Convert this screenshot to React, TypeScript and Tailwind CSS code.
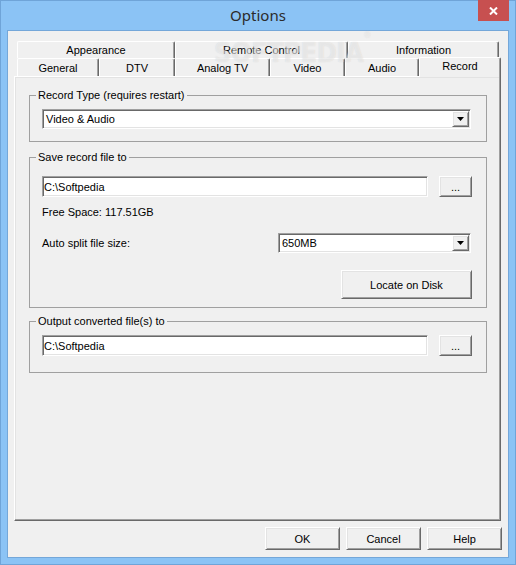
import React from "react";

const FONT = "font-['Liberation_Sans',Arial,sans-serif]";

// classic win32 3d edges
const sunken =
  "bg-white border border-t-[#a0a0a0] border-l-[#a0a0a0] border-r-white border-b-white shadow-[inset_1px_1px_0_#696969,inset_-1px_-1px_0_#e3e3e3]";
const raised =
  "bg-[#f0f0f0] border border-t-white border-l-white border-r-[#696969] border-b-[#696969] shadow-[inset_1px_1px_0_#e3e3e3,inset_-1px_-1px_0_#a0a0a0]";

const Button = ({ label, className }: { label: string; className: string }) => {
  return (
    <button
      className={`${raised} ${className} flex items-center justify-center text-[11px] leading-[14px] text-black`}
    >
      {label}
    </button>
  );
};

const Select = ({ value, className }: { value: string; className: string }) => {
  return (
    <div className={`${sunken} ${className} h-[20px] p-[1px] flex items-center`}>
      <span className="flex-1 pl-[2px] text-[11px] leading-[14px]">{value}</span>
      <span className={`${raised} w-[17px] h-[16px] flex items-center justify-center`}>
        <svg width="7" height="4" viewBox="0 0 7 4">
          <path d="M0 0h7L3.5 4z" fill="#000" />
        </svg>
      </span>
    </div>
  );
};

const TextField = ({ value }: { value: string }) => {
  return (
    <div className={`${sunken} w-[386px] h-[21px] flex items-center pl-[1px] text-[11px] leading-[14px]`}>
      {value}
    </div>
  );
};

const Group = ({
  title,
  className,
  children,
}: {
  title: string;
  className: string;
  children: React.ReactNode;
}) => {
  return (
    <fieldset className="w-[458px] border border-[#a0a0a0]">
      <legend className="ml-[6px] px-[2px] text-[11px] leading-[14px]">{title}</legend>
      <div className={`flex flex-col pl-[12px] ${className}`}>{children}</div>
    </fieldset>
  );
};

const tabBase =
  "border-t border-l border-r border-t-white border-l-white border-r-[#696969] rounded-t-[2px] shadow-[inset_-1px_0_0_#a0a0a0] bg-[#f0f0f0] flex justify-center text-[11px] leading-[14px]";

const Tab = ({ label, className }: { label: string; className: string }) => {
  return <div className={`${tabBase} ${className}`}>{label}</div>;
};

export default function App() {
  return (
    <div
      className={`w-[516px] h-[565px] bg-[#8bc3f5] border border-[#6fa4d8] flex flex-col text-black ${FONT}`}
    >
      {/* title bar */}
      <div className="relative h-[29px] flex items-center justify-center">
        <span className="font-['Noto_Sans',sans-serif] text-[15px] text-[#2b2b2b]">Options</span>
        <div className="absolute top-[-1px] right-[6px] w-[31px] h-[21px] bg-[#c75050] flex items-center justify-center">
          <svg width="9" height="8" viewBox="0 0 9 8">
            <path d="M1 0.5l7 7M8 0.5l-7 7" stroke="#fff" strokeWidth="2" />
          </svg>
        </div>
      </div>

      {/* client */}
      <div className="mx-[6px] h-[528px] border border-[#74a7d9] bg-[#f0f0f0] flex flex-col pt-[10px]">
        <div className="relative ml-[6px] w-[487px] flex flex-col">
          <div className="flex h-[17px] pl-[3px]">
            <Tab label="Appearance" className="w-[158px] h-[17px] pt-[1px]" />
            <Tab label="Remote Control" className="w-[173px] h-[17px] pt-[1px]" />
            <Tab label="Information" className="w-[151px] h-[17px] pt-[1px]" />
          </div>
          <div className="flex items-end h-[18px] pl-[3px]">
            <Tab label="General" className="w-[82px] h-[18px] pt-[2px]" />
            <Tab label="DTV" className="w-[76px] h-[18px] pt-[2px]" />
            <Tab label="Analog TV" className="w-[95px] h-[18px] pt-[2px]" />
            <Tab label="Video" className="w-[75px] h-[18px] pt-[2px]" />
            <Tab label="Audio" className="w-[74px] h-[18px] pt-[2px]" />
            <Tab label="Record" className="relative z-10 w-[82px] h-[20px] -mt-[1px] -mb-[1px] pt-[1px]" />
          </div>

          {/* tab page */}
          <div className="h-[445px] border border-t-white border-l-white border-r-[#696969] border-b-[#696969] shadow-[inset_-1px_-1px_0_#a0a0a0,inset_1px_1px_0_#e3e3e3] pl-[14px] pt-[11px] flex flex-col">
            <Group title="Record Type (requires restart)" className="pt-[7px] pb-[12px]">
              <Select value="Video & Audio" className="w-[429px]" />
            </Group>

            <div className="mt-[8px]">
              <Group title="Save record file to" className="pt-[12px] pb-[8px] pr-[14px]">
                <div className="flex gap-[11px]">
                  <TextField value="C:\Softpedia" />
                  <Button label="..." className="w-[33px] h-[21px]" />
                </div>
                <div className="mt-[8px] text-[11px] leading-[14px]">Free Space: 117.51GB</div>
                <div className="mt-[14px] h-[20px] flex items-center justify-between">
                  <span className="text-[11px] leading-[14px]">Auto split file size:</span>
                  <Select value="650MB" className="w-[193px] mr-[1px]" />
                </div>
                <div className="mt-[17px] flex justify-end">
                  <Button label="Locate on Disk" className="w-[131px] h-[29px]" />
                </div>
              </Group>
            </div>

            <div className="mt-[6px]">
              <Group title="Output converted file(s) to" className="pt-[7px] pb-[16px]">
                <div className="flex gap-[11px]">
                  <TextField value="C:\Softpedia" />
                  <Button label="..." className="w-[33px] h-[21px]" />
                </div>
              </Group>
            </div>
          </div>

          {/* watermark */}
          <span className="pointer-events-none absolute left-[200px] top-[-2px] font-['DejaVu_Sans_Condensed',sans-serif] font-bold text-[27px] leading-none tracking-[-0.5px] text-white/45 [text-shadow:0_0_1px_rgba(160,160,160,0.35)] z-20">
            SOFTPEDIA<sup className="text-[9px] align-top font-normal">®</sup>
          </span>
        </div>

        <div className="mt-[6px] flex justify-end gap-[6px] pr-[6px]">
          <Button label="OK" className="w-[75px] h-[23px]" />
          <Button label="Cancel" className="w-[75px] h-[23px]" />
          <Button label="Help" className="w-[75px] h-[23px]" />
        </div>
      </div>
    </div>
  );
}
